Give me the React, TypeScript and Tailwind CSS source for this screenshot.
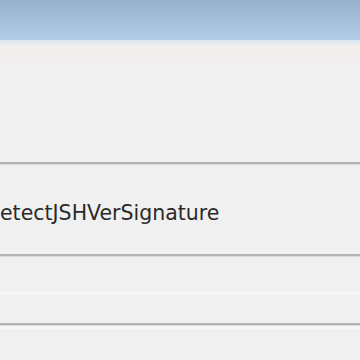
export default function App() {
  return (
    <div className="w-[360px] h-[360px] overflow-hidden bg-[#f0f0f0] flex flex-col" style={{ fontFamily: "Tahoma, 'DejaVu Sans', sans-serif" }}>
      <div className="h-[40px] shrink-0 bg-gradient-to-b from-[#98b2ce] to-[#b3cde6]" />
      <div className="h-[5px] shrink-0 bg-gradient-to-b from-[#d9e5ef] to-[#ebeef1]" />
      <div className="h-[15px] shrink-0 bg-[#f2eeee]" />
      <div className="h-[102px] shrink-0" />
      <div className="h-[3px] shrink-0 bg-[#b2b2b2] border-b border-[#d8d8d8]" />
      <div className="h-[38px] shrink-0" />
      <div className="h-[20px] shrink-0 flex items-center text-[20.5px] leading-none text-[#2a2a2a] whitespace-nowrap">
        etectJSHVerSignature
      </div>
      <div className="h-[31px] shrink-0" />
      <div className="h-[3px] shrink-0 bg-[#b4b4b4] border-b border-[#d8d8d8]" />
      <div className="h-[35px] shrink-0" />
      <div className="h-[3px] shrink-0 bg-[#f6f6f6]" />
      <div className="h-[28px] shrink-0" />
      <div className="h-[3px] shrink-0 bg-[#b4b4b4] border-b border-[#d8d8d8]" />
      <div className="h-[3px] shrink-0 bg-[#f8f8f8]" />
      <div className="flex-1" />
    </div>
  );
}
